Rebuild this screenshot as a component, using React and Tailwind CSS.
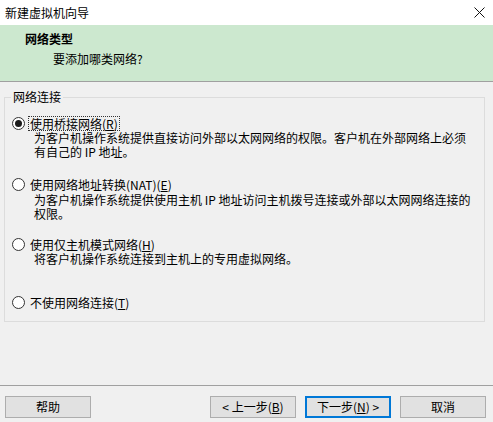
import React from "react";

const font = { fontFamily: '"Noto Sans CJK SC", "Noto Sans", sans-serif' };

function Radio({ checked }) {
  return (
    <span className="relative flex h-[13px] w-[13px] shrink-0 items-center justify-center rounded-full border border-[#333333] bg-white">
      {checked && <span className="h-[7px] w-[7px] rounded-full bg-[#1a1a1a]" />}
    </span>
  );
}

function Row({ checked, focused, label, desc, mt, descMt = "" }) {
  return (
    <div className={mt}>
      <div className="ml-[1px] flex h-[15px] items-center">
        <Radio checked={checked} />
        <span
          className={
            "ml-[3px] border border-dotted px-[1px] leading-[13px] " +
            (focused ? "border-[#333333]" : "border-transparent")
          }
        >
          {label}
        </span>
      </div>
      {desc && (
        <div className={"ml-[23px] leading-[14px] " + descMt}>
          {desc.map((d, i) => (
            <div key={i} className="h-[14px] whitespace-nowrap">
              {d}
            </div>
          ))}
        </div>
      )}
    </div>
  );
}

function Btn({ children, primary, className = "" }) {
  return (
    <div
      className={
        "flex h-[22px] w-[86px] items-center justify-center bg-[#e1e1e1] text-[12px] leading-[14px] text-black " +
        (primary ? "border-2 border-[#0078d7] " : "border border-[#adadad] ") +
        className
      }
    >
      {children}
    </div>
  );
}

export default function App() {
  return (
    <div
      style={font}
      className="flex h-[422px] w-[493px] flex-col overflow-hidden bg-[#f0f0f0] text-[12px] text-black"
    >
      {/* Title bar */}
      <div className="flex h-[25px] shrink-0 items-center justify-between bg-white pl-[5px] pr-[8px]">
        <span className="leading-[14px]">新建虚拟机向导</span>
        <svg width="11" height="11" viewBox="0 0 11 11" className="mt-[-1px]">
          <path d="M0.5 0.5 L10.5 10.5 M10.5 0.5 L0.5 10.5" stroke="#111" strokeWidth="1" fill="none" />
        </svg>
      </div>

      {/* Header */}
      <div className="h-[57px] shrink-0 border-b border-[#a0a0a0] bg-[#cce8cf] pl-[25px] pt-[7px]">
        <div className="font-bold leading-[14px]">网络类型</div>
        <div className="mt-[6px] pl-[28px] leading-[14px]">要添加哪类网络?</div>
      </div>

      {/* Body */}
      <div className="flex flex-1 flex-col">
        <fieldset className="mx-[4px] mt-[8px] h-[232px] w-[481px] border border-[#dcdcdc] pl-[6px]">
          <legend className="px-[2px] leading-[14px]">网络连接</legend>
          <Row
            mt="mt-[12px]"
            checked
            focused
            label={
              <>
                使用桥接网络(<u>R</u>)
              </>
            }
            desc={[
              "为客户机操作系统提供直接访问外部以太网网络的权限。客户机在外部网络上必须",
              "有自己的 IP 地址。",
            ]}
          />
          <Row
            mt="mt-[18px]"
            descMt="mt-[1px]"
            label={
              <>
                使用网络地址转换(NAT)(<u>E</u>)
              </>
            }
            desc={[
              "为客户机操作系统提供使用主机 IP 地址访问主机拨号连接或外部以太网网络连接的",
              "权限。",
            ]}
          />
          <Row
            mt="mt-[16px]"
            label={
              <>
                使用仅主机模式网络(<u>H</u>)
              </>
            }
            desc={["将客户机操作系统连接到主机上的专用虚拟网络。"]}
          />
          <Row
            mt="mt-[29px]"
            label={
              <>
                不使用网络连接(<u>T</u>)
              </>
            }
          />
        </fieldset>

        <div className="flex-1" />

        {/* Footer */}
        <div className="flex h-[37px] shrink-0 items-start border-t border-[#a0a0a0] pl-[5px] pr-[7px] pt-[10px]">
          <Btn>帮助</Btn>
          <div className="ml-auto flex gap-[9px]">
            <Btn>
              &lt; 上一步(<u>B</u>)
            </Btn>
            <Btn primary>
              下一步(<u>N</u>) &gt;
            </Btn>
            <Btn>取消</Btn>
          </div>
        </div>
      </div>
    </div>
  );
}
